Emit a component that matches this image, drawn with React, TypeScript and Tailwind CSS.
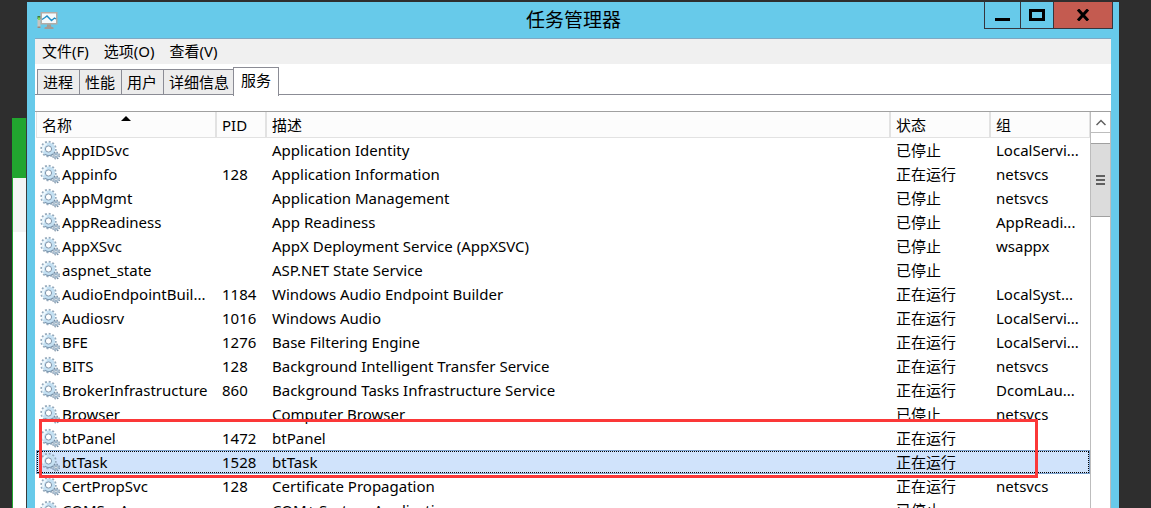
import { clsx } from "clsx";

interface Service {
  name: string;
  pid?: number;
  description: string;
  running?: boolean;
  group?: string;
}

const services: Service[] = [
  { name: "AppIDSvc", description: "Application Identity", group: "LocalServi..." },
  { name: "Appinfo", pid: 128, description: "Application Information", running: true, group: "netsvcs" },
  { name: "AppMgmt", description: "Application Management", group: "netsvcs" },
  { name: "AppReadiness", description: "App Readiness", group: "AppReadi..." },
  { name: "AppXSvc", description: "AppX Deployment Service (AppXSVC)", group: "wsappx" },
  { name: "aspnet_state", description: "ASP.NET State Service" },
  { name: "AudioEndpointBuil...", pid: 1184, description: "Windows Audio Endpoint Builder", running: true, group: "LocalSyst..." },
  { name: "Audiosrv", pid: 1016, description: "Windows Audio", running: true, group: "LocalServi..." },
  { name: "BFE", pid: 1276, description: "Base Filtering Engine", running: true, group: "LocalServi..." },
  { name: "BITS", pid: 128, description: "Background Intelligent Transfer Service", running: true, group: "netsvcs" },
  { name: "BrokerInfrastructure", pid: 860, description: "Background Tasks Infrastructure Service", running: true, group: "DcomLau..." },
  { name: "Browser", description: "Computer Browser", group: "netsvcs" },
  { name: "btPanel", pid: 1472, description: "btPanel", running: true },
  { name: "btTask", pid: 1528, description: "btTask", running: true },
  { name: "CertPropSvc", pid: 128, description: "Certificate Propagation", running: true, group: "netsvcs" },
  { name: "COMSysApp", description: "COM+ System Application" },
];

const selectedName = "btTask";
const menus = ["文件(F)", "选项(O)", "查看(V)"];
const tabs = ["进程", "性能", "用户", "详细信息", "服务"];
const activeTab = "服务";

const TaskManagerIcon = () => (
  <svg width="22" height="20" viewBox="0 0 22 20" aria-hidden="true">
    <path d="M0.5 7h3v11h-3z" fill="#c9c4be" />
    <path d="M0.5 16.5h3V18h-3z" fill="#8f8a86" />
    <path d="M0.5 6h3v3h-3z" fill="#3f7a3a" />
    <path d="M1 7.5h2V10H1z" fill="#7fd858" />
    <path d="M3.5 2h17v12.5h-17z" fill="#b3aca6" />
    <path d="M5 3.5h14V13H5z" fill="#f4fafd" />
    <path d="M5 9.5l3-2 2-1.5 4.5 4.5 3-2.5 1.5 1" fill="none" stroke="#1f8fc6" strokeWidth="1.4" />
    <path d="M10 14.5h4v2l2.5 1v1.5h-9v-1.5l2.5-1z" fill="#a39c96" />
  </svg>
);

const GearsIcon = () => (
  <svg className="shrink-0" width="20" height="20" viewBox="0 0 20 20" aria-hidden="true">
    <circle cx="8.5" cy="9" r="7.2" fill="none" stroke="#94a9bb" strokeWidth="2" strokeDasharray="1.9 1.87" />
    <circle cx="8.5" cy="9" r="4.9" fill="none" stroke="#c4e0f2" strokeWidth="3.4" />
    <path d="M3.6 11.5a5.4 5.4 0 0 1 3-7.6" fill="none" stroke="#eef7fc" strokeWidth="2" />
    <path d="M5 14.2a6.4 6.4 0 0 0 7.5 0" fill="none" stroke="#7f99b1" strokeWidth="1.2" />
    <circle cx="8.5" cy="9" r="3.1" fill="#fff" stroke="#7d94aa" strokeWidth="1" />
    <circle cx="16" cy="15.5" r="3.4" fill="none" stroke="#768ca2" strokeWidth="1.2" strokeDasharray="1.5 1.17" />
    <circle cx="16" cy="15.5" r="2.4" fill="#dceefa" stroke="#8fa9bf" strokeWidth="1" />
    <circle cx="16" cy="15.5" r="1.1" fill="#fff" stroke="#768ca2" strokeWidth="0.7" />
  </svg>
);

const TitleBar = () => (
  <header className="flex h-9 items-start pl-2">
    <div className="flex w-32 shrink-0 items-center self-center pl-0.5">
      <TaskManagerIcon />
    </div>
    <h1 className="flex-1 self-center text-center text-[19px] leading-6">任务管理器</h1>
    <div className="mr-1.5 flex h-[27px] w-[129px] shrink-0 border border-t-0 border-[#35353d]">
      <button aria-label="最小化" className="flex w-[35px] items-center justify-center">
        <svg width="16" height="16" viewBox="0 0 16 16">
          <path d="M0 12.5h15" stroke="#000" strokeWidth="3" />
        </svg>
      </button>
      <button aria-label="最大化" className="flex w-[34px] items-center justify-center border-x border-[#35353d]">
        <svg width="16" height="12" viewBox="0 0 16 12">
          <path d="M1.5 1.5h13v9h-13z" fill="none" stroke="#000" strokeWidth="3" />
        </svg>
      </button>
      <button aria-label="关闭" className="flex flex-1 items-center justify-center bg-[#c45b50]">
        <svg width="14" height="12" viewBox="0 0 14 12">
          <path d="M2 0.5l10 11M12 0.5l-10 11" stroke="#000" strokeWidth="3" />
        </svg>
      </button>
    </div>
  </header>
);

const TabStrip = () => (
  <div role="tablist" className="flex h-[31px] shrink-0 items-end border-b border-[#8b8c95] pl-0.5">
    {tabs.map((tab) => (
      <button
        key={tab}
        role="tab"
        aria-selected={tab === activeTab}
        className={clsx(
          "border border-b-0 border-[#8b8c95] text-[15px] leading-6",
          tab === activeTab
            ? "z-10 -mb-0.5 -ml-0.5 h-[29px] bg-white px-[7px] pb-1"
            : "h-[25px] border-r-0 bg-[#ececec] pl-[5px] pr-1.5"
        )}
      >
        {tab}
      </button>
    ))}
  </div>
);

const ServiceTable = () => (
  <div className="relative min-w-0 flex-1">
    <table className="w-full table-fixed border-separate border-spacing-0 text-left text-[15px] leading-6">
      <colgroup>
        <col className="w-[180px]" />
        <col className="w-[50px]" />
        <col />
        <col className="w-[100px]" />
        <col className="w-[100px]" />
      </colgroup>
      <thead>
        <tr className="h-[26px] bg-[#fcfcfc]">
          {["名称", "PID", "描述", "状态", "组"].map((title) => (
            <th key={title} className="relative border-x border-b border-[#e2e2e2] py-0 pl-[5px] font-normal">
              {title}
              {title === "名称" && (
                <svg className="absolute left-[84px] top-1" width="10" height="6" viewBox="0 0 10 6">
                  <path d="M5 0l5 5H0z" />
                </svg>
              )}
            </th>
          ))}
        </tr>
      </thead>
      <tbody>
        {services.map((service) => (
          <tr
            key={service.name}
            className={clsx(
              "h-6",
              service.name === selectedName &&
                "bg-[#d0e3fb] shadow-[inset_0_0_0_1px_#7da2ce] outline-1 -outline-offset-2 outline-dotted outline-black"
            )}
          >
            <td className="py-0 pl-1">
              <div className="flex h-6 items-center gap-0.5">
                <GearsIcon />
                <span>{service.name}</span>
              </div>
            </td>
            <td className="px-1.5 py-0">{service.pid}</td>
            <td className="truncate px-1.5 py-0">{service.description}</td>
            <td className="px-1.5 py-0">{service.running ? "正在运行" : "已停止"}</td>
            <td className="px-1.5 py-0">{service.group}</td>
          </tr>
        ))}
      </tbody>
    </table>
    {/* callout around the two bt* services */}
    <div className="pointer-events-none absolute left-[3px] right-[52px] top-[307px] h-[59px] border-3 border-[#fb3838]" />
  </div>
);

const ScrollBar = () => (
  <div className="w-[21px] shrink-0 border-x border-[#bdbdbd]">
    <button aria-label="向上滚动" className="flex h-[21px] w-full items-center justify-center border-b border-[#bdbdbd]">
      <svg width="10" height="7" viewBox="0 0 10 7">
        <path d="M0.5 6L5 1.5 9.5 6" fill="none" stroke="#606060" strokeWidth="1.5" />
      </svg>
    </button>
    <div className="mt-2.5 flex h-[74px] items-center justify-center border-y border-[#a0a0a0] bg-[#dcdcdc]">
      <svg width="9" height="10" viewBox="0 0 9 10">
        <path d="M0 1h9M0 5h9M0 9h9" stroke="#606060" strokeWidth="2" />
      </svg>
    </div>
  </div>
);

export default function App() {
  return (
    <div className="flex h-screen overflow-hidden bg-[#2e2e2e] pl-3 pr-8 font-['Noto_Sans','Noto_Sans_CJK_SC',sans-serif] text-black">
      <div className="mt-[118px] flex w-[15px] shrink-0 flex-col border-l border-r border-l-[#21a52f] border-r-[#3a3a3a] bg-white">
        <div className="h-[60px] bg-[#21a52f]" />
        <div className="h-[54px] bg-[#f4f4f4]" />
      </div>
      <main className="mt-0.5 flex min-w-0 flex-1 flex-col bg-[#67caea]">
        <TitleBar />
        <div className="mx-2 flex min-h-0 flex-1 flex-col border-t border-[#7fa9c4] bg-white">
          <nav className="flex h-[25px] shrink-0 items-start gap-[15px] bg-[#f0f0f0] px-[7px]">
            {menus.map((menu) => (
              <button key={menu} className="text-[15px] leading-6">
                {menu}
              </button>
            ))}
          </nav>
          <TabStrip />
          <div className="mt-4 flex min-h-0 flex-1 overflow-hidden border-t border-[#a0a0a0] pl-px">
            <ServiceTable />
            <ScrollBar />
          </div>
        </div>
      </main>
    </div>
  );
}
